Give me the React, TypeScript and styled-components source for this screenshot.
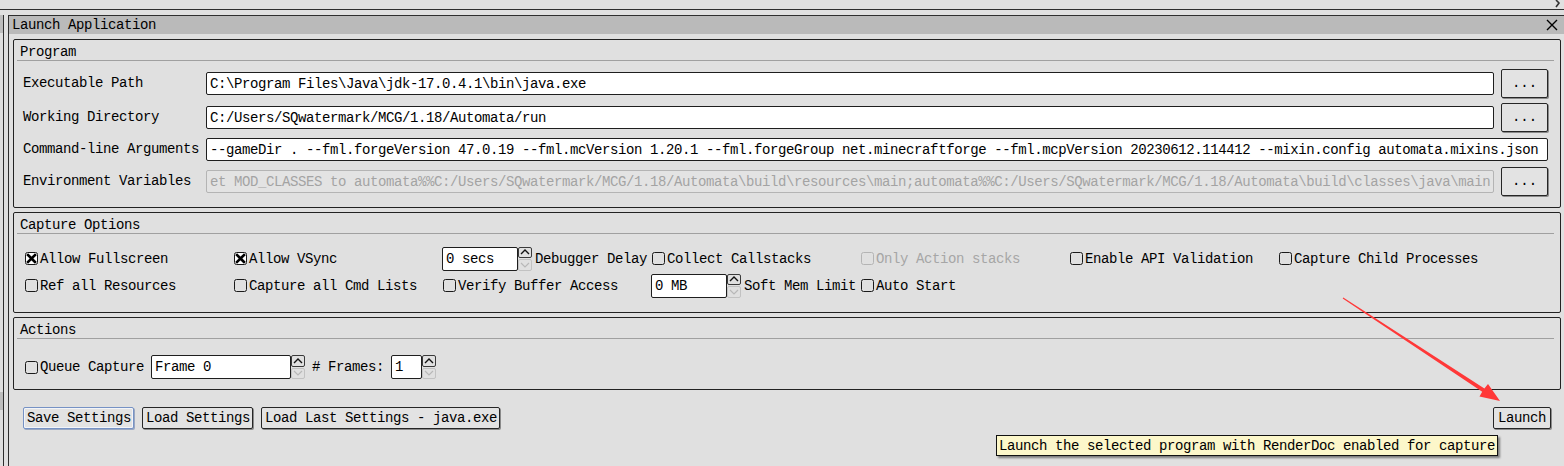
import * as React from "react";
import styled, { createGlobalStyle, css } from "styled-components";

const GlobalStyle = createGlobalStyle`
  html, body {
    margin: 0;
    padding: 0;
    background: #e0e0e0;
  }
  body {
    font-family: "Liberation Mono", "DejaVu Sans Mono", monospace;
    font-size: 14px;
    letter-spacing: -0.4px;
    color: #000;
  }
`;

const Page = styled.div`
  position: relative;
  width: 1564px;
  height: 466px;
  overflow: hidden;
  background: #e0e0e0;
`;

const TopStrip = styled.div`
  position: relative;
  height: 9px;
  border-bottom: 1px solid #2e2e2e;
  margin-bottom: 5px;
  svg {
    position: absolute;
    right: 3px;
    top: 0;
  }
`;

const Main = styled.div`
  display: flex;
  height: 451px;
`;

const LeftRail = styled.div`
  width: 3px;
  margin-right: 4px;
  border-right: 1px solid #2e2e2e;
  display: flex;
  flex-direction: column;
`;

const RailTab = styled.div<{ $top: number }>`
  height: 18px;
  margin-top: ${(p) => p.$top}px;
  background: #bdbdbd;
`;

const Dock = styled.div`
  flex: 1;
  display: flex;
  flex-direction: column;
  border-left: 1px solid #2e2e2e;
  border-top: 1px solid #2e2e2e;
`;

const TitleBar = styled.div`
  height: 18px;
  display: flex;
  align-items: center;
  justify-content: space-between;
  padding: 0 6px 0 3px;
  background: #bababa;
  line-height: 18px;
`;

const Content = styled.div`
  display: flex;
  flex-direction: column;
  padding: 5px 3px 0 4px;
  gap: 4px;
`;

const Group = styled.div`
  border: 1px solid #222;
  border-radius: 2px;
`;

const GroupHeader = styled.div`
  height: 20px;
  line-height: 25px;
  margin: 0 6px 0 3px;
  padding-left: 3px;
  border-bottom: 1px solid #a0a0a0;
  overflow: hidden;
`;

const FormGrid = styled.div`
  display: grid;
  grid-template-columns: 176px 1fr 47px;
  grid-template-rows: 30px 30px 26px 30px;
  column-gap: 7px;
  row-gap: 4px;
  align-items: center;
  padding: 7px 12px 11px 9px;
`;

const FieldLabel = styled.div`
  white-space: nowrap;
`;

const TextField = styled.div<{ $span?: boolean; $disabled?: boolean }>`
  height: 23px;
  box-sizing: border-box;
  padding: 0 3px;
  line-height: 22px;
  white-space: nowrap;
  overflow: hidden;
  border-radius: 2px;
  background: #fff;
  border: 1px solid #1e1e1e;
  ${(p) => p.$span && "grid-column: 2 / 4;"}
  ${(p) =>
    p.$disabled &&
    css`
      background: #e3e3e3;
      border-color: #b4b4b4;
      color: #a3a3a3;
    `}
`;

const Button = styled.button<{ $focused?: boolean }>`
  font: inherit;
  letter-spacing: inherit;
  color: #000;
  height: 22px;
  padding: 0 2px 0 3px;
  background: #e3e3e3;
  border: 1px solid #262626;
  border-radius: 2px;
  box-shadow: 1px 1px 0 #8a8a8a;
  white-space: nowrap;
  line-height: 20px;
  ${(p) =>
    p.$focused &&
    css`
      border-color: #7692c4;
      box-shadow: inset 0 0 0 1px #f2f4f8, 1px 1px 0 #9aa8c2;
    `}
`;

const LaunchButton = styled(Button)`
  padding: 0 4px;
`;

const BrowseButton = styled(Button)`
  width: 47px;
  height: 29px;
  padding: 0;
  letter-spacing: 0;
`;

const OptionsGrid = styled.div`
  display: grid;
  grid-template-columns: repeat(7, 209px);
  grid-auto-rows: 27px;
  align-items: center;
  padding: 11px 0 13px 11px;
`;

const Cell = styled.div<{ $shift?: number }>`
  display: flex;
  align-items: center;
  white-space: nowrap;
  margin-left: ${(p) => p.$shift ?? 0}px;
`;

const CheckWrap = styled.label<{ $disabled?: boolean }>`
  display: inline-flex;
  align-items: center;
  gap: 2px;
  white-space: nowrap;
  color: ${(p) => (p.$disabled ? "#a6a6a6" : "#000")};
  svg {
    flex: none;
  }
`;

const Spin = styled.div<{ $w: number }>`
  display: flex;
  width: ${(p) => p.$w}px;
  height: 24px;
  flex: none;
`;

const SpinField = styled.div`
  flex: 1;
  box-sizing: border-box;
  height: 24px;
  line-height: 23px;
  padding: 0 3px;
  background: #fff;
  border: 1px solid #1e1e1e;
  border-radius: 2px;
  white-space: nowrap;
  overflow: hidden;
`;

const SpinArrows = styled.div`
  width: 14px;
  display: flex;
  flex-direction: column;
  gap: 1px;
`;

const SpinHalf = styled.div<{ $off?: boolean }>`
  flex: 1;
  box-sizing: border-box;
  border: 1px solid ${(p) => (p.$off ? "#c2c2c2" : "#3a3a3a")};
  border-radius: 2px;
  display: flex;
  align-items: center;
  justify-content: center;
`;

const Suffix = styled.span`
  margin-left: 3px;
`;

const ActionRow = styled.div`
  display: flex;
  align-items: center;
  gap: 7px;
  height: 26px;
  padding: 15px 0 9px 11px;
`;

const BottomBar = styled.div`
  display: flex;
  justify-content: space-between;
  margin-top: 13px;
  padding: 0 10px 0 10px;
`;

const ButtonGroup = styled.div`
  display: flex;
  gap: 8px;
`;

const Tooltip = styled.div`
  position: absolute;
  left: 996px;
  top: 435px;
  height: 19px;
  line-height: 20px;
  padding: 0 2px;
  background: #fcf7ca;
  border: 1px solid #111;
  box-shadow: 2px 2px 2px rgba(0, 0, 0, 0.45);
  white-space: nowrap;
`;

const Overlay = styled.svg`
  position: absolute;
  left: 0;
  top: 0;
  pointer-events: none;
`;

const CheckBox: React.FC<{ checked?: boolean; disabled?: boolean; label: string }> = ({
  checked,
  disabled,
  label,
}) => {
  const c = disabled ? "#b4b4b4" : "#1a1a1a";
  return (
    <CheckWrap $disabled={disabled}>
      <svg width="13" height="13" viewBox="0 0 13 13">
        <rect x="0.5" y="0.5" width="12" height="12" rx="2" fill={checked ? "#fff" : "none"} stroke={c} />
        {checked && (
          <path d="M3 3 L10 10 M10 3 L3 10" stroke="#000" strokeWidth="2.6" strokeLinecap="square" />
        )}
      </svg>
      {label}
    </CheckWrap>
  );
};

const SpinBox: React.FC<{ value: string; width: number }> = ({ value, width }) => (
  <Spin $w={width}>
    <SpinField>{value}</SpinField>
    <SpinArrows>
      <SpinHalf>
        <svg width="10" height="6" viewBox="0 0 10 6">
          <path d="M1 5 L5 1 L9 5" fill="none" stroke="#111" strokeWidth="1.4" />
        </svg>
      </SpinHalf>
      <SpinHalf $off>
        <svg width="10" height="6" viewBox="0 0 10 6">
          <path d="M1 1 L5 5 L9 1" fill="none" stroke="#b8b8b8" strokeWidth="1.2" />
        </svg>
      </SpinHalf>
    </SpinArrows>
  </Spin>
);

const programRows = [
  { label: "Executable Path", value: "C:\\Program Files\\Java\\jdk-17.0.4.1\\bin\\java.exe", browse: true },
  { label: "Working Directory", value: "C:/Users/SQwatermark/MCG/1.18/Automata/run", browse: true },
  {
    label: "Command-line Arguments",
    value:
      "--gameDir . --fml.forgeVersion 47.0.19 --fml.mcVersion 1.20.1 --fml.forgeGroup net.minecraftforge --fml.mcpVersion 20230612.114412 --mixin.config automata.mixins.json",
    browse: false,
  },
  {
    label: "Environment Variables",
    value:
      "et MOD_CLASSES to automata%%C:/Users/SQwatermark/MCG/1.18/Automata\\build\\resources\\main;automata%%C:/Users/SQwatermark/MCG/1.18/Automata\\build\\classes\\java\\main",
    browse: true,
    disabled: true,
  },
];

export default function App() {
  return (
    <Page>
      <GlobalStyle />
      <TopStrip>
        <svg width="6" height="8" viewBox="0 0 6 8">
          <path d="M1 0 L4 3 L1 7" fill="none" stroke="#333" strokeWidth="1.6" />
        </svg>
      </TopStrip>
      <Main>
        <LeftRail>
          <RailTab $top={0} />
          <RailTab $top={359} />
        </LeftRail>
        <Dock>
          <TitleBar>
            <span>Launch Application</span>
            <svg width="12" height="12" viewBox="0 0 12 12">
              <path d="M1 1 L11 11 M11 1 L1 11" stroke="#000" strokeWidth="1.4" />
            </svg>
          </TitleBar>
          <Content>
            <Group>
              <GroupHeader>Program</GroupHeader>
              <FormGrid>
                {programRows.map((r) => (
                  <React.Fragment key={r.label}>
                    <FieldLabel>{r.label}</FieldLabel>
                    <TextField $span={!r.browse} $disabled={r.disabled}>
                      {r.value}
                    </TextField>
                    {r.browse && <BrowseButton>...</BrowseButton>}
                  </React.Fragment>
                ))}
              </FormGrid>
            </Group>

            <Group>
              <GroupHeader>Capture Options</GroupHeader>
              <OptionsGrid>
                <Cell><CheckBox checked label="Allow Fullscreen" /></Cell>
                <Cell><CheckBox checked label="Allow VSync" /></Cell>
                <Cell $shift={-1}>
                  <SpinBox value="0 secs" width={90} />
                  <Suffix>Debugger Delay</Suffix>
                </Cell>
                <Cell><CheckBox label="Collect Callstacks" /></Cell>
                <Cell><CheckBox disabled label="Only Action stacks" /></Cell>
                <Cell><CheckBox label="Enable API Validation" /></Cell>
                <Cell><CheckBox label="Capture Child Processes" /></Cell>

                <Cell><CheckBox label="Ref all Resources" /></Cell>
                <Cell><CheckBox label="Capture all Cmd Lists" /></Cell>
                <Cell><CheckBox label="Verify Buffer Access" /></Cell>
                <Cell $shift={-1}>
                  <SpinBox value="0 MB" width={90} />
                  <Suffix>Soft Mem Limit</Suffix>
                </Cell>
                <Cell><CheckBox label="Auto Start" /></Cell>
              </OptionsGrid>
            </Group>

            <Group>
              <GroupHeader>Actions</GroupHeader>
              <ActionRow>
                <CheckBox label="Queue Capture" />
                <SpinBox value="Frame 0" width={154} />
                <span># Frames:</span>
                <SpinBox value="1" width={45} />
              </ActionRow>
            </Group>

            <BottomBar>
              <ButtonGroup>
                <Button $focused>Save Settings</Button>
                <Button>Load Settings</Button>
                <Button>Load Last Settings - java.exe</Button>
              </ButtonGroup>
              <LaunchButton>Launch</LaunchButton>
            </BottomBar>
          </Content>
        </Dock>
      </Main>

      <Tooltip>Launch the selected program with RenderDoc enabled for capture</Tooltip>

      <Overlay width="1564" height="466" viewBox="0 0 1564 466">
        <polygon
          points="1343.3,297.5 1484.4,388.4 1488,384 1500,401 1479.5,396.5 1482.2,391.8 1342.7,298.5"
          fill="#ff3838"
        />
      </Overlay>
    </Page>
  );
}
